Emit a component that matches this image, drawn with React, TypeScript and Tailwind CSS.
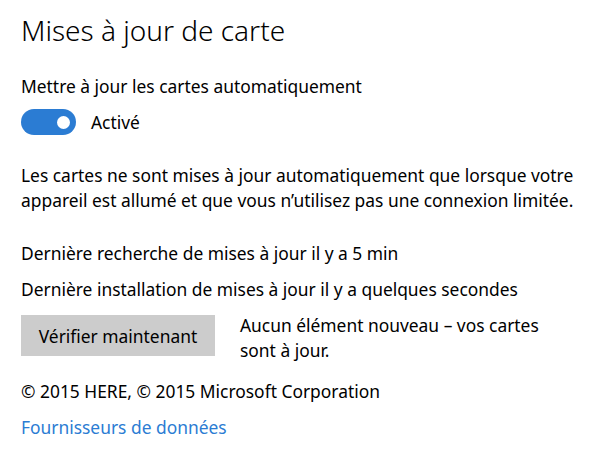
export default function App() {
  return (
    <div
      className="w-[600px] h-[450px] bg-white text-black overflow-hidden pl-[21px] pt-[10px]"
      style={{ fontFamily: '"Noto Sans", "Open Sans", sans-serif' }}
    >
      <h1 className="text-[28px] font-light leading-[40px]">Mises à jour de carte</h1>

      <div className="mt-[26px] text-[17.4px] leading-[20px]">Mettre à jour les cartes automatiquement</div>

      <div className="mt-[13px] flex items-center gap-[15px]">
        <div className="w-[55px] h-[26px] rounded-full bg-[#2b7cd3] flex items-center justify-end pr-[6px]">
          <div className="w-[13px] h-[13px] rounded-full bg-white" />
        </div>
        <span className="text-[17.4px]">Activé</span>
      </div>

      <p className="mt-[28px] text-[17.4px] leading-[25px] w-[565px]">
        Les cartes ne sont mises à jour automatiquement que lorsque votre appareil est allumé et que vous n’utilisez pas une connexion limitée.
      </p>

      <div className="mt-[30px] text-[17.4px] leading-[20px]">Dernière recherche de mises à jour il y a 5 min</div>
      <div className="mt-[16px] text-[17.4px] leading-[20px]">Dernière installation de mises à jour il y a quelques secondes</div>

      <div className="mt-[16px] flex items-start">
        <button className="w-[194px] h-[41px] bg-[#cccccc] text-[17.4px]">Vérifier maintenant</button>
        <p className="ml-[25px] text-[17.4px] leading-[25px] w-[330px] -mt-[2px]">
          Aucun élément nouveau – vos cartes sont à jour.
        </p>
      </div>

      <div className="mt-[18px] text-[17.4px] leading-[20px]">© 2015 HERE, © 2015 Microsoft Corporation</div>
      <div className="mt-[16px] text-[17.4px] leading-[20px] text-[#2b7cd3]">Fournisseurs de données</div>
    </div>
  );
}
